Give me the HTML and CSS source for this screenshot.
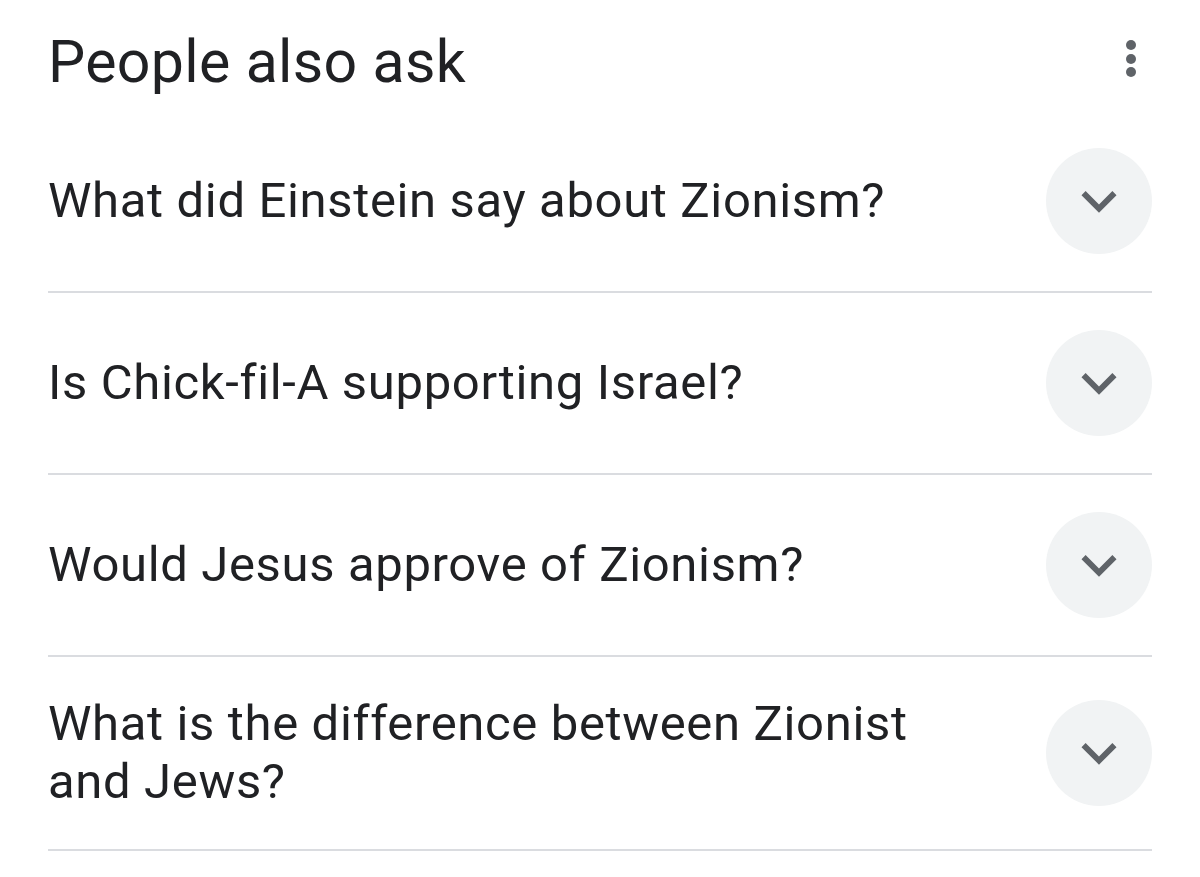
FILE: index.html
```html
<!DOCTYPE html>
<html lang="en">
<head>
<meta charset="utf-8">
<title>People also ask</title>
<link rel="stylesheet" href="styles.css">
</head>
<body>
<div class="paa">
  <div class="paa-header">
    <h2 class="paa-title">People also ask</h2>
    <button class="kebab" aria-label="More options">
      <span class="dot"></span><span class="dot"></span><span class="dot"></span>
    </button>
  </div>
  <div class="paa-row">
    <div class="q">What did Einstein say about Zionism?</div>
    <div class="chev"><svg viewBox="0 0 24 24"><path d="M16.59 8.59L12 13.17 7.41 8.59 6 10l6 6 6-6z"/></svg></div>
  </div>
  <div class="paa-row">
    <div class="q">Is Chick-fil-A supporting Israel?</div>
    <div class="chev"><svg viewBox="0 0 24 24"><path d="M16.59 8.59L12 13.17 7.41 8.59 6 10l6 6 6-6z"/></svg></div>
  </div>
  <div class="paa-row">
    <div class="q">Would Jesus approve of Zionism?</div>
    <div class="chev"><svg viewBox="0 0 24 24"><path d="M16.59 8.59L12 13.17 7.41 8.59 6 10l6 6 6-6z"/></svg></div>
  </div>
  <div class="paa-row">
    <div class="q">What is the difference between Zionist<br>and Jews?</div>
    <div class="chev"><svg viewBox="0 0 24 24"><path d="M16.59 8.59L12 13.17 7.41 8.59 6 10l6 6 6-6z"/></svg></div>
  </div>
</div>
</body>
</html>
```
FILE: styles.css
```css
html, body {
  margin: 0;
  padding: 0;
  background: #ffffff;
}
body {
  font-family: Roboto, "Noto Sans", Arial, sans-serif;
  color: #202124;
}
.paa {
  padding: 0 48px;
}
.paa-header {
  display: flex;
  align-items: flex-start;
  justify-content: space-between;
  height: 111px;
}
.paa-title {
  margin: 0;
  padding-top: 23px;
  font-size: 59px;
  font-weight: 400;
  line-height: 78px;
  letter-spacing: 0.35px;
}
.kebab {
  display: flex;
  flex-direction: column;
  align-items: center;
  gap: 3.5px;
  margin-top: 40px;
  margin-right: 16px;
  padding: 0;
  border: 0;
  background: none;
}
.dot {
  width: 10px;
  height: 10px;
  border-radius: 50%;
  background: #5f6368;
}
.paa-row {
  display: flex;
  align-items: center;
  justify-content: space-between;
  padding: 37px 0;
  border-bottom: 2px solid #dadce0;
}
.paa-row:last-child {
  padding: 38px 0;
}
.q {
  font-size: 49px;
  line-height: 58px;
  letter-spacing: 0.65px;
}
.chev {
  width: 106px;
  height: 106px;
  border-radius: 50%;
  background: #f1f3f4;
  display: flex;
  align-items: center;
  justify-content: center;
  flex-shrink: 0;
}
.chev svg {
  width: 70px;
  height: 70px;
  fill: #5f6368;
}
```
